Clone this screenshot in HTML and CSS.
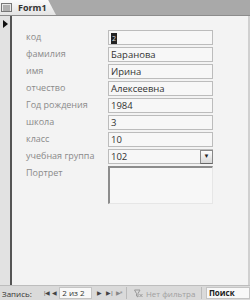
FILE: index.html
```html
<!DOCTYPE html>
<html lang="ru">
<head>
    <meta charset="UTF-8">
    <link rel="stylesheet" href="styles.css">
</head>
<body>
    <div class="tabbar">
        <div class="tab">
            <svg class="tab-icon" width="11" height="9" viewBox="0 0 11 9">
                <rect x="0.5" y="0.5" width="10" height="8" fill="#e8e8e8" stroke="#777"/>
                <line x1="2" y1="3" x2="9" y2="3" stroke="#777"/>
                <line x1="2" y1="5" x2="9" y2="5" stroke="#777"/>
                <line x1="2" y1="7" x2="9" y2="7" stroke="#777"/>
            </svg>
            <span class="tab-title">Form1</span>
        </div>
    </div>

    <div class="main">
        <div class="selector"><span class="arrow"></span></div>
        <div class="form">
            <div class="row"><span class="label">код</span><span class="field"><span class="sel">2</span></span></div>
            <div class="row"><span class="label">фамилия</span><span class="field">Баранова</span></div>
            <div class="row"><span class="label">имя</span><span class="field">Ирина</span></div>
            <div class="row"><span class="label">отчество</span><span class="field">Алексеевна</span></div>
            <div class="row"><span class="label">Год рождения</span><span class="field">1984</span></div>
            <div class="row"><span class="label">школа</span><span class="field">3</span></div>
            <div class="row"><span class="label">класс</span><span class="field">10</span></div>
            <div class="row"><span class="label">учебная группа</span><span class="field combo">102<span class="drop">&#9660;</span></span></div>
            <div class="row"><span class="label">Портрет</span><span class="field picture"></span></div>
        </div>
    </div>

    <div class="navbar">
        <span class="nav-label">Запись:</span>
        <span class="btn">|&#9664;</span>
        <span class="btn">&#9664;</span>
        <span class="counter">2 из 2</span>
        <span class="btn wide">&#9654;</span>
        <span class="btn">&#9654;|</span>
        <span class="btn dim">&#9654;*</span>
        <span class="filter">
            <svg width="9" height="9" viewBox="0 0 9 9">
                <path d="M0.5 1 L6 1 L4 4.5 L4 8 L2.5 7 L2.5 4.5 Z" fill="none" stroke="#999"/>
                <path d="M5.5 5 L8.5 8 M8.5 5 L5.5 8" stroke="#999"/>
            </svg>
            Нет фильтра
        </span>
        <span class="search">Поиск</span>
    </div>
</body>
</html>
```

FILE: styles.css
```css
body {
    margin: 0;
    width: 250px;
    height: 300px;
    font-family: "Open Sans", "Noto Sans", sans-serif;
    background-color: #f3f3f3;
    display: flex;
    flex-direction: column;
    overflow: hidden;
}

.tabbar {
    height: 16px;
    background-color: #a9a9a9;
    border-bottom: 1px solid #8c8c8c;
    box-sizing: border-box;
    display: flex;
    align-items: flex-end;
}

.tab {
    width: 56px;
    height: 15px;
    background: linear-gradient(#fafafa, #e4e4e4);
    clip-path: polygon(0 0, 86% 0, 100% 100%, 0 100%);
    display: flex;
    align-items: center;
    gap: 6px;
    padding-left: 1px;
    box-sizing: border-box;
}

.tab-title {
    font-size: 9px;
    font-weight: bold;
    color: #333;
}

.main {
    flex: 1;
    display: flex;
}

.selector {
    width: 10px;
    background-color: #e2e2e2;
    border-right: 2px solid #555;
    position: relative;
}

.arrow {
    position: absolute;
    left: 3px;
    top: 4px;
    border-left: 5px solid #111;
    border-top: 4px solid transparent;
    border-bottom: 4px solid transparent;
}

.form {
    flex: 1;
    border-right: 2px solid #d0d0d0;
    padding: 14px 0 0 14px;
    display: flex;
    flex-direction: column;
    gap: 2px;
}

.row {
    display: flex;
    height: 15px;
    align-items: stretch;
}

.label {
    width: 82px;
    font-size: 9px;
    color: #8a8a8a;
    line-height: 14px;
}

.field {
    width: 105px;
    box-sizing: border-box;
    border: 1px solid #bcbcbc;
    background-color: #f7f7f7;
    font-size: 9.5px;
    color: #333;
    line-height: 13px;
    padding-left: 2px;
    position: relative;
}

.sel {
    display: inline-block;
    background-color: #222;
    color: #ddd;
    font-size: 7px;
    line-height: 11px;
    width: 6px;
    text-align: center;
    margin-top: 1px;
}

.combo {
    display: flex;
    justify-content: space-between;
    padding-right: 0;
}

.drop {
    width: 11px;
    border: 1px solid #888;
    border-bottom-color: #666;
    background: linear-gradient(#fdfdfd, #d8d8d8);
    font-size: 6px;
    line-height: 11px;
    text-align: center;
    color: #222;
    margin: 0 -1px -1px 0;
}

.picture {
    height: 38px;
    align-self: flex-start;
    border-top: 2px solid #8c8c8c;
    border-left: 2px solid #8c8c8c;
    border-right-color: #e6e6e6;
    border-bottom-color: #e6e6e6;
}

.row:last-child {
    height: 38px;
}

.navbar {
    height: 15px;
    background-color: #dadada;
    border-top: 1px solid #bdbdbd;
    box-sizing: border-box;
    display: flex;
    align-items: center;
    font-size: 8px;
    color: #333;
    padding-left: 2px;
    white-space: nowrap;
}

.nav-label {
    width: 41px;
}

.btn {
    font-size: 6px;
    color: #444;
    margin-right: 3px;
    letter-spacing: -1px;
}

.btn.wide {
    margin-left: 5px;
    margin-right: 5px;
}

.btn.dim {
    color: #888;
    margin-right: 0;
}

.counter {
    width: 33px;
    height: 12px;
    background-color: #f8f8f8;
    border: 1px solid #c4c4c4;
    box-sizing: border-box;
    line-height: 10px;
    padding-left: 2px;
}

.filter {
    margin-left: 4px;
    width: 76px;
    box-sizing: border-box;
    border-left: 1px solid #bbb;
    padding-left: 7px;
    border-right: 1px solid #bbb;
    color: #a0a0a0;
    display: flex;
    align-items: center;
    gap: 3px;
    height: 12px;
}

.search {
    margin-left: 4px;
    width: 44px;
    height: 12px;
    background-color: #f8f8f8;
    border: 1px solid #c4c4c4;
    box-sizing: border-box;
    line-height: 10px;
    padding-left: 2px;
    font-weight: bold;
    color: #222;
}
```
